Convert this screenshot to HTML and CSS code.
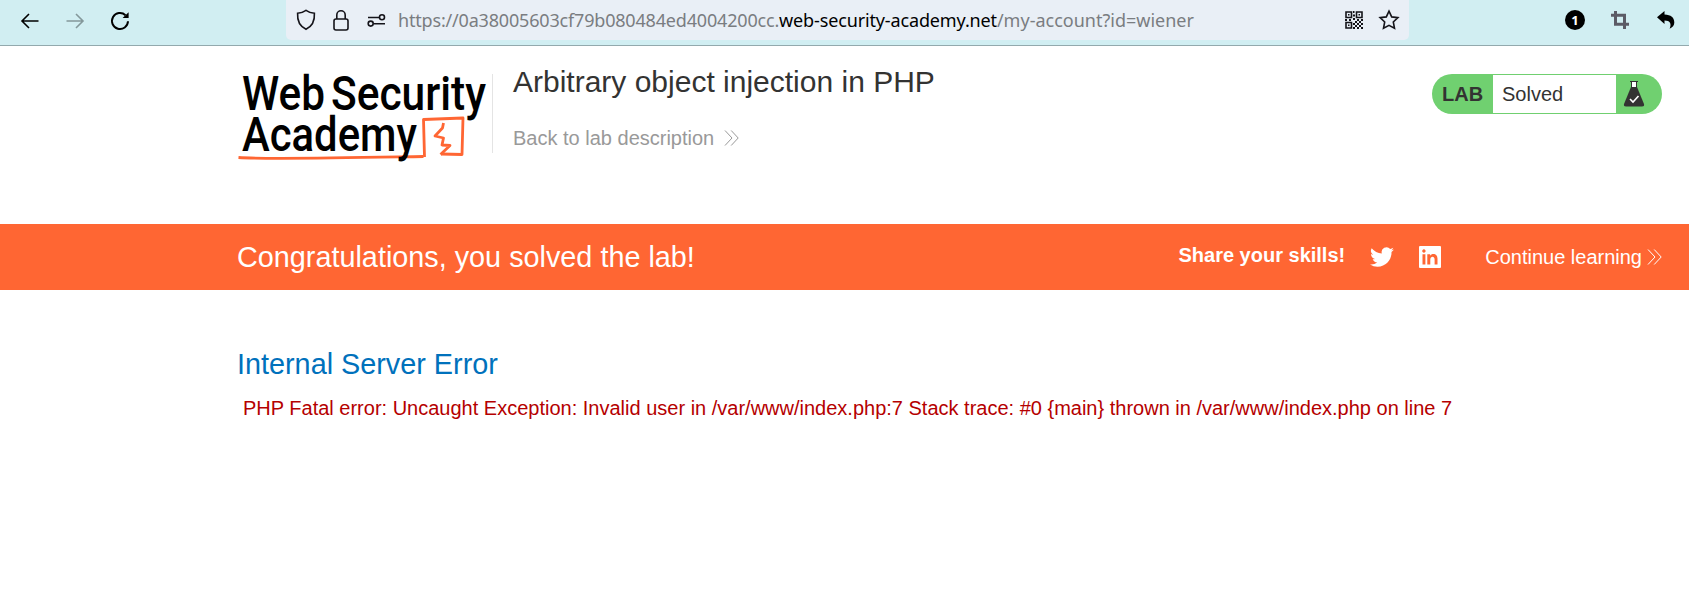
FILE: index.html
```
<!DOCTYPE html>
<html lang="en">
<head>
<meta charset="utf-8">
<title>Arbitrary object injection in PHP</title>
<link rel="stylesheet" href="styles.css">
</head>
<body>
<div class="browser-bar">
  <div class="nav">
    <svg class="i-back" width="18" height="16" viewBox="0 0 18 16"><path d="M17.5 8H1M8 1L1 8l7 7"/></svg>
    <svg class="i-forward" width="18" height="16" viewBox="0 0 18 16"><path d="M.5 8H17M10 1l7 7-7 7"/></svg>
    <svg class="i-reload" width="19" height="18" viewBox="0 0 19 18"><path d="M17 9.3A8 8 0 1 1 14.5 3.2"/><path class="solid" d="M17.6.2v5.900h-6z"/></svg>
  </div>
  <div class="url-field">
    <svg class="i-shield" width="20" height="22" viewBox="0 0 20 22"><path d="M10 1.300C7.500 3 4.500 4 1.600 4.300 1.200 11 3.500 17.200 10 20.300 16.500 17.200 18.800 11 18.400 4.300 15.500 4 12.500 3 10 1.300z"/></svg>
    <svg class="i-lock" width="16" height="21" viewBox="0 0 16 21"><rect x="1" y="9" width="14" height="11" rx="2"/><path d="M3.800 9V5a4.200 4.200 0 0 1 8.400 0v4"/></svg>
    <svg class="i-perm" width="19" height="13" viewBox="0 0 19 13"><path d="M1 3.500h11.500M6.500 9.700H18"/><circle cx="15" cy="3.300" r="2.500"/><circle cx="3.700" cy="9.600" r="2.500"/></svg>
    <div class="url"><span class="u1">https://0a38005603cf79b080484ed4004200cc.</span><span class="u2">web-security-academy.net</span><span class="u3">/my-account?id=wiener</span></div>
    <svg class="i-qr" width="18" height="18" viewBox="0 0 18 18"><path d="M1 1h5.500v5.500H1zM11.500 1H17v5.500h-5.500zM1 11.500h5.500V17H1z"/><path class="dots" d="M3 3h1.500v1.500H3zM13.500 3H15v1.500h-1.500zM3 13.500h1.500V15H3zM8 0h1.500v2H8zM8 3.500h2v2H8zM0 8h2v2H0zM4 8h2v2H4zM8 7h2v2H8zM12 8h2v2h-2zM16 8h2v2h-2zM10 10h2v2h-2zM14 10h2v2h-2zM8 12h2v2H8zM12 12h2v2h-2zM16 12h2v2h-2zM10 14h2v2h-2zM14 14h2v2h-2zM8 16h2v2H8zM12 16h2v2h-2zM16 16h2v2h-2z"/></svg>
    <svg class="i-star" width="20" height="20" viewBox="0 0 20 20"><path d="M10 1.200l2.700 5.700 6.200.8-4.600 4.300 1.200 6.300-5.500-3-5.500 3L5.700 12 1.100 7.700l6.200-.8z"/></svg>
  </div>
  <div class="extensions">
    <span class="counter">1</span>
    <svg class="i-crop" width="18" height="18" viewBox="0 0 18 18"><path d="M0 4.200h13.500V18M4.500 0v13.300H18"/></svg>
    <svg class="i-undo" width="18" height="18" viewBox="0 0 18 18"><path d="M0 6.200L7.500 0v3.600c6.500.2 9.800 3 9.800 8 0 2.800-1.700 4.900-4.700 6.200 2.200-4.700.6-8.200-5.100-8.200v3.500z"/></svg>
  </div>
</div>
<header class="lab-header">
  <svg class="logo" width="255" height="96" viewBox="0 0 255 96">
    <g class="mark"><path d="M1.500 84.500C30 86.500 100 85 186.500 83.500"/><path d="M187.500 84L186.500 46.500l39.500-1.500-1 36.500-21-.5"/><path d="M206.500 50l-1 5-7.500 8 8.500 2-1.500 7 8 .5-9.500 9"/></g>
    <g class="words"><text x="5" y="37" textLength="83" lengthAdjust="spacingAndGlyphs">Web</text><text x="94" y="37" textLength="155" lengthAdjust="spacingAndGlyphs">Security</text><text x="5" y="78" textLength="175" lengthAdjust="spacingAndGlyphs">Academy</text></g>
  </svg>
  <div class="title-block">
    <h2>Arbitrary object injection in PHP</h2>
    <a class="back">Back to lab description<svg width="15" height="16" viewBox="0 0 15 16"><path d="M1 .5l7 7.500-7 7.500M7.200.5l7 7.500-7 7.500"/></svg></a>
  </div>
  <div class="lab-status">
    <span class="tag">LAB</span>
    <p>Solved</p>
    <svg width="20" height="26" viewBox="0 0 20 26"><path class="glass" d="M7 1h6v9H7z"/><path class="flask" d="M6 .5h8M7.500 1v5M12.500 1v5"/><path class="body" d="M7 6h6l7 17q.6 2.500-2 2.500H2q-2.600 0-2-2.500z"/><path class="tick" d="M6 18l3 3 5.500-6"/></svg>
  </div>
</header>
<section class="banner">
  <h4>Congratulations, you solved the lab!</h4>
  <div class="share">
    <span class="share-label">Share your skills!</span>
    <svg class="i-twitter" width="24" height="22" viewBox="0 2 24 20"><path d="M24 4.600a10 10 0 0 1-2.800.8 4.900 4.900 0 0 0 2.100-2.700 9.900 9.900 0 0 1-3.100 1.200 4.900 4.900 0 0 0-8.400 4.500A14 14 0 0 1 1.700 3.200a4.900 4.900 0 0 0 1.500 6.500 4.900 4.900 0 0 1-2.200-.6c0 2.300 1.600 4.400 3.900 4.900a5 5 0 0 1-2.200.1 4.900 4.900 0 0 0 4.600 3.400A9.900 9.900 0 0 1 0 19.500 14 14 0 0 0 7.500 21.700c9.100 0 14.300-7.700 14-14.600A10 10 0 0 0 24 4.600z"/></svg>
    <svg class="i-linkedin" width="22" height="22" viewBox="0 0 22 22"><path fill-rule="evenodd" d="M1 0h20q1 0 1 1v20q0 1-1 1H1q-1 0-1-1V1q0-1 1-1zM3.500 8.300h2.900v10.200H3.500zM4.900 3.300a1.700 1.700 0 1 0 .01 0zM8.300 8.300h2.800v1.400c1.500-2.600 7.400-2.400 7.400 2.700v6.100h-2.900v-5c0-3.800-4.300-3.300-4.300 0v5h-3z"/></svg>
    <a class="continue">Continue learning<svg width="15" height="16" viewBox="0 0 15 16"><path d="M1 .5l7 7.500-7 7.500M7.200.5l7 7.500-7 7.500"/></svg></a>
  </div>
</section>
<main class="content">
  <h4>Internal Server Error</h4>
  <p class="warning">PHP Fatal error: Uncaught Exception: Invalid user in /var/www/index.php:7 Stack trace: #0 {main} thrown in /var/www/index.php on line 7</p>
</main>
</body>
</html>
```
FILE: styles.css
```
* { box-sizing: border-box; }
body { margin: 0; background: #fff; color: #333332; font-family: "Liberation Sans", Arial, sans-serif; font-size: 20px; }
svg { display: block; flex: none; overflow: visible; fill: none; stroke: #15141a; stroke-width: 1.600; }
h2, h4, p { margin: 0; font-weight: 400; white-space: nowrap; }

.browser-bar { display: flex; height: 46px; background: #d1eef2; border-bottom: 1px solid #93a9ad; }
.nav { display: flex; align-items: center; width: 286px; height: 41px; padding-left: 21px; gap: 27px; }
.i-back { stroke: #000; }
.i-forward { stroke: #84989b; }
.i-reload { stroke: #000; stroke-width: 2; }
.solid { fill: #000; stroke: none; }
.url-field { display: flex; align-items: center; width: 1123px; height: 40px; padding-left: 10px; background: #e9eff6; border-radius: 0 0 5px 5px; }
.i-lock { margin-left: 17px; }
.i-perm { margin-left: 18px; }
.url { flex: 1; margin-left: 12px; font: 18px/24px "Noto Sans", sans-serif; color: #7a7d81; white-space: nowrap; }
.u1 { letter-spacing: -0.18px; }
.u2 { color: #000; letter-spacing: -0.14px; }
.dots { fill: #15141a; stroke: none; }
.i-star { margin: 0 10px 0 16px; }
.extensions { display: flex; align-items: center; height: 40px; margin-left: 156px; }
.counter { width: 20px; height: 20px; border-radius: 50%; background: #000; color: #fff; font: 700 13px/20px "Noto Sans", sans-serif; text-align: center; }
.i-crop { margin-left: 26px; stroke: #5b5b66; stroke-width: 3; }
.i-undo { margin-left: 28px; fill: #000; stroke: none; }

.lab-header { display: flex; align-items: flex-start; height: 178px; padding: 27px 27px 0 237px; }
.logo { width: 255px; height: 96px; }
.mark { stroke: #ff6633; stroke-width: 2.800; stroke-linejoin: round; }
.words { font: 500 48px Roboto, sans-serif; fill: #000; stroke: none; }
.title-block { height: 79px; margin-top: 1px; padding-left: 20px; border-left: 1px solid #e4e4e4; }
h2 { font-size: 30px; line-height: 34px; margin-top: -9px; }
.back { display: flex; align-items: center; margin-top: 27px; line-height: 24px; color: #999; white-space: nowrap; }
.back svg { margin-left: 10px; stroke: #999; stroke-width: 1; }
.lab-status { display: flex; align-items: center; width: 230px; height: 40px; margin: 1px 0 0 auto; background: #70d070; border-radius: 20px; padding-left: 10px; }
.tag { width: 51px; font-weight: 700; line-height: 40px; }
.lab-status p { width: 123px; height: 38px; padding-left: 9px; background: #fff; line-height: 38px; }
.lab-status svg { margin-left: 8px; }
.glass { fill: #fff; stroke: none; }
.flask { stroke: #333332; stroke-width: 1; }
.body { fill: #333332; stroke: none; }
.tick { stroke: #fff; }

.banner { display: flex; align-items: center; justify-content: space-between; height: 66px; padding: 0 27px 0 237px; background: #ff6633; color: #fff; }
h4 { font-size: 28.800px; line-height: 34px; }
.share { display: flex; align-items: center; white-space: nowrap; }
.share svg { fill: #fff; stroke: none; }
.share-label { font-weight: 700; margin-top: -4px; }
.i-twitter { margin-left: 25px; }
.i-linkedin { margin-left: 25px; }
.continue { display: flex; align-items: center; margin-left: 44px; }
.share .continue svg { margin-left: 5px; fill: none; stroke: #fff; stroke-width: 1; }

.content { padding: 57px 0 0 237px; }
.content h4 { color: #0071bc; }
.warning { margin-top: 15px; padding-left: 6px; line-height: 24px; color: #b50000; }
```
